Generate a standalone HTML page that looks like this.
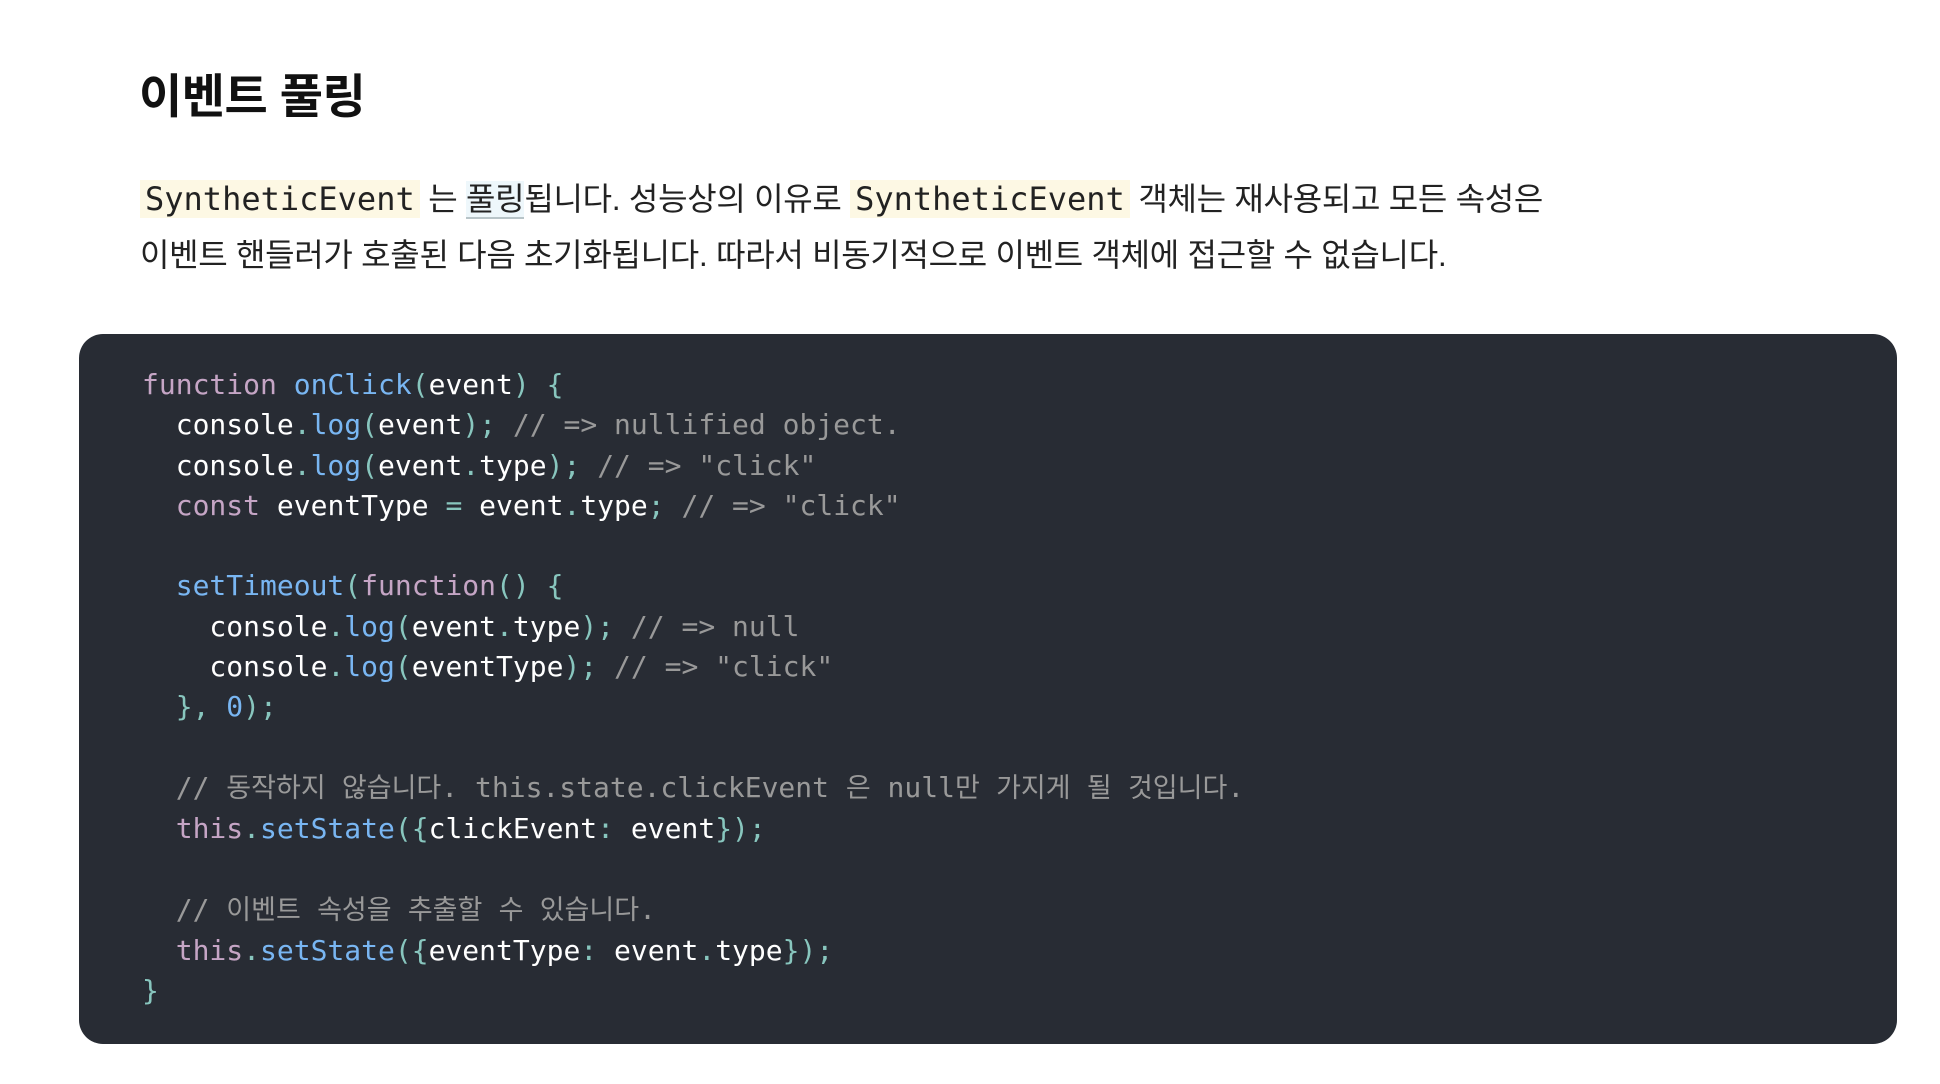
<!DOCTYPE html>
<html><head><meta charset="utf-8">
<style>
html,body{margin:0;padding:0;background:#fff;width:1940px;height:1084px;overflow:hidden}
h1{position:absolute;left:139px;top:65px;margin:0;font:bold 47px/64px "Liberation Sans","Noto Sans CJK KR",sans-serif;color:#111;letter-spacing:-0.5px}
.p{position:absolute;left:140px;top:171px;width:1780px;font:32px/56px "Liberation Sans","Noto Sans CJK KR",sans-serif;color:#222;letter-spacing:-0.3px}
.ic{font-family:"DejaVu Sans Mono","Liberation Mono",monospace;font-size:32px;background:#fdf8e4;padding:0 5px;letter-spacing:0}
.lk{background:#eef7fb;border-bottom:2px solid #b8c4c8}
.code{position:absolute;left:79px;top:334px;width:1818px;height:710px;background:#282c34;border-radius:24px}
pre{margin:0;position:absolute;left:63px;top:31px;font:28px/40.3px "DejaVu Sans Mono","Noto Sans CJK KR",monospace;color:#fff}
.k{color:#c5a5c5}.f{color:#79b6f2}.u{color:#88c6be}.c{color:#999}.n{color:#79b6f2}
.ko{font-size:27px}
</style></head><body>
<h1>이벤트 풀링</h1>
<div class="p"><span class="ic">SyntheticEvent</span> 는 <span class="lk">풀링</span>됩니다. 성능상의 이유로 <span class="ic">SyntheticEvent</span> 객체는 재사용되고 모든 속성은<br>이벤트 핸들러가 호출된 다음 초기화됩니다. 따라서 비동기적으로 이벤트 객체에 접근할 수 없습니다.</div>
<div class="code"><pre><span class="k">function</span> <span class="f">onClick</span><span class="u">(</span>event<span class="u">)</span> <span class="u">{</span>
  console<span class="u">.</span><span class="f">log</span><span class="u">(</span>event<span class="u">);</span> <span class="c">// =&gt; nullified object.</span>
  console<span class="u">.</span><span class="f">log</span><span class="u">(</span>event<span class="u">.</span>type<span class="u">);</span> <span class="c">// =&gt; "click"</span>
  <span class="k">const</span> eventType <span class="u">=</span> event<span class="u">.</span>type<span class="u">;</span> <span class="c">// =&gt; "click"</span>

  <span class="f">setTimeout</span><span class="u">(</span><span class="k">function</span><span class="u">()</span> <span class="u">{</span>
    console<span class="u">.</span><span class="f">log</span><span class="u">(</span>event<span class="u">.</span>type<span class="u">);</span> <span class="c">// =&gt; null</span>
    console<span class="u">.</span><span class="f">log</span><span class="u">(</span>eventType<span class="u">);</span> <span class="c">// =&gt; "click"</span>
  <span class="u">},</span> <span class="n">0</span><span class="u">);</span>

  <span class="c">// <span class="ko">동작하지 않습니다</span>. this.state.clickEvent <span class="ko">은</span> null<span class="ko">만 가지게 될 것입니다</span>.</span>
  <span class="k">this</span><span class="u">.</span><span class="f">setState</span><span class="u">({</span>clickEvent<span class="u">:</span> event<span class="u">});</span>

  <span class="c">// <span class="ko">이벤트 속성을 추출할 수 있습니다</span>.</span>
  <span class="k">this</span><span class="u">.</span><span class="f">setState</span><span class="u">({</span>eventType<span class="u">:</span> event<span class="u">.</span>type<span class="u">});</span>
<span class="u">}</span></pre></div>
</body></html>
